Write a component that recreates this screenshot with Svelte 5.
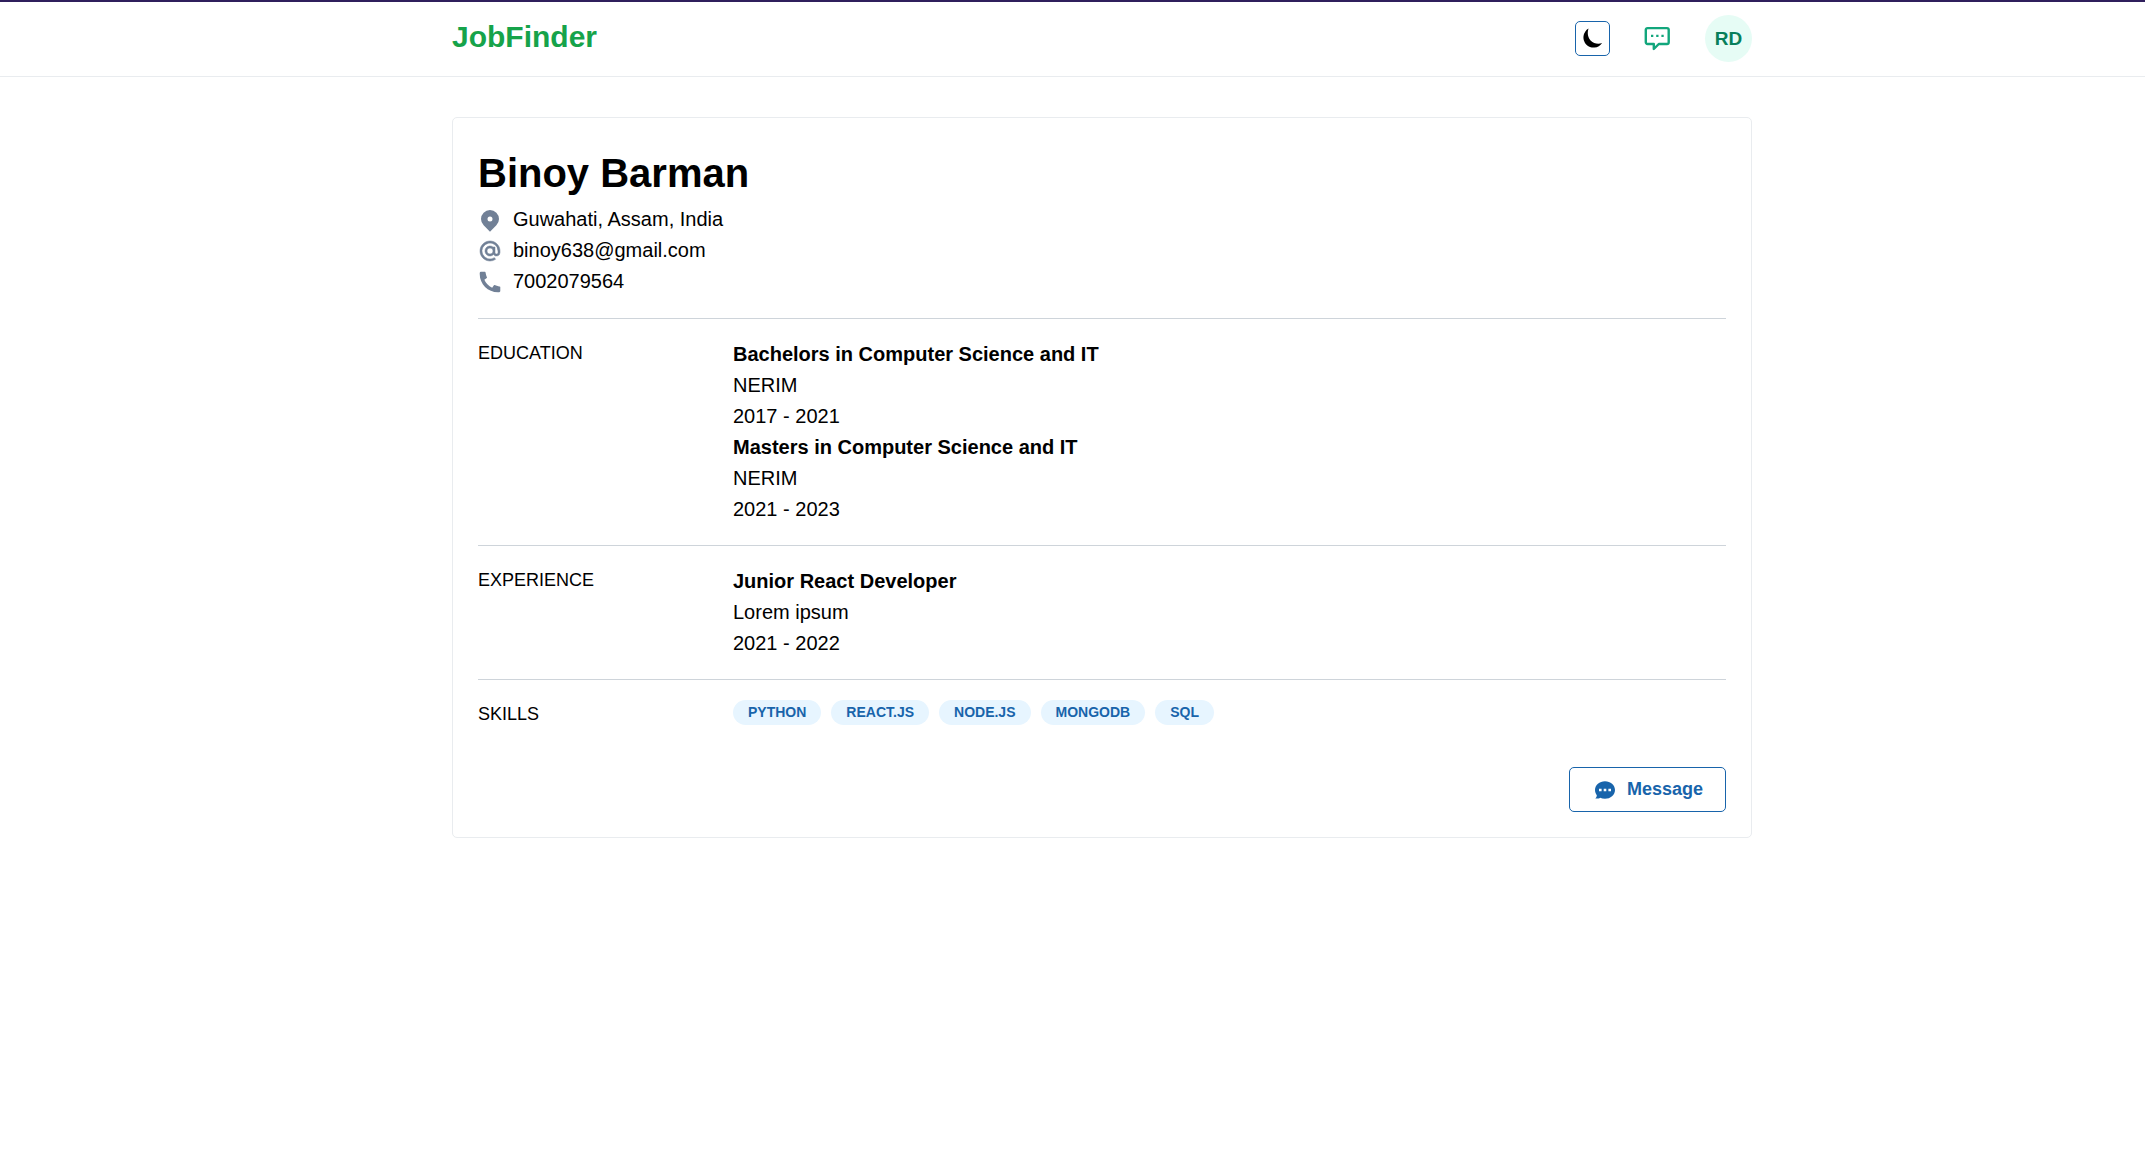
<script>
  const profile = {
    name: 'Binoy Barman',
    location: 'Guwahati, Assam, India',
    email: 'binoy638@gmail.com',
    phone: '7002079564',
  };
  const sections = [
    {
      title: 'EDUCATION',
      entries: [
        { title: 'Bachelors in Computer Science and IT', place: 'NERIM', years: '2017 - 2021' },
        { title: 'Masters in Computer Science and IT', place: 'NERIM', years: '2021 - 2023' },
      ],
    },
    {
      title: 'EXPERIENCE',
      entries: [{ title: 'Junior React Developer', place: 'Lorem ipsum', years: '2021 - 2022' }],
    },
  ];
  const skills = ['PYTHON', 'REACT.JS', 'NODE.JS', 'MONGODB', 'SQL'];
</script>

<header>
  <div class="shell bar">
    <a class="logo" href="#home">JobFinder</a>
    <nav>
      <button class="icon-button outlined" type="button" aria-label="Toggle color scheme">
        <svg width="21" height="21" viewBox="0 0 21 21" fill="currentColor" aria-hidden="true">
          <path d="M6.500.600A10.200 10.200 0 1 0 20.100 15.100C16 16.400 11.700 15.600 8.800 12.700C5.600 9.500 5.100 4.800 6.500.600Z" />
        </svg>
      </button>
      <button class="icon-button teal" type="button" aria-label="Messages">
        <svg width="27" height="27" viewBox="0 0 27 27" fill="none" aria-hidden="true">
          <path d="M3.500 3.100H23A1.700 1.700 0 0 1 24.700 4.800V17.300A1.700 1.700 0 0 1 23 19H14.800L9.800 24V19H3.500A1.700 1.700 0 0 1 1.800 17.300V4.800A1.700 1.700 0 0 1 3.500 3.100Z" stroke="currentColor" stroke-width="2.400" stroke-linejoin="round" />
          <path d="M7 9.700h2.300v2.200H7zM12.200 9.700h2.300v2.200h-2.300zM17.400 9.700h2.300v2.200h-2.300z" fill="currentColor" />
        </svg>
      </button>
      <button class="avatar" type="button">RD</button>
    </nav>
  </div>
</header>

<main>
  <article class="shell card">
    <h1>{profile.name}</h1>
    <ul class="contacts">
      <li>
        <svg width="24" height="24" viewBox="0 0 24 24" fill="currentColor" aria-hidden="true">
          <path d="M18.364 17.364L12 23.728l-6.364-6.364a9 9 0 1 1 12.728 0zM12 13.500a2.500 2.500 0 1 0 0-5 2.500 2.500 0 0 0 0 5z" />
        </svg>
        {profile.location}
      </li>
      <li>
        <svg width="24" height="24" viewBox="0 0 24 24" fill="currentColor" stroke="currentColor" stroke-width=".5" aria-hidden="true">
          <path d="M20 12a8 8 0 1 0-3.562 6.657l1.110 1.664A9.953 9.953 0 0 1 12 22C6.477 22 2 17.523 2 12S6.477 2 12 2s10 4.477 10 10v1.500a3.500 3.500 0 0 1-6.396 1.966A5 5 0 1 1 15 8h2v5.500a1.500 1.500 0 0 0 3 0V12zm-8-3a3 3 0 1 0 0 6 3 3 0 0 0 0-6z" />
        </svg>
        {profile.email}
      </li>
      <li>
        <svg width="24" height="24" viewBox="1.500 1.500 21 21" fill="currentColor" aria-hidden="true">
          <path d="M21 16.420v3.536a1 1 0 0 1-.93.998c-.437.03-.794.046-1.070.046-8.837 0-16-7.163-16-16 0-.276.015-.633.046-1.070A1 1 0 0 1 4.044 3H7.580a.5.5 0 0 1 .498.45c.023.23.044.413.064.552A13.901 13.901 0 0 0 9.350 8.003c.095.2.033.439-.147.567l-2.158 1.542a13.047 13.047 0 0 0 6.844 6.844l1.540-2.154a.462.462 0 0 1 .573-.149 13.901 13.901 0 0 0 4 1.205c.139.02.322.042.55.064a.5.5 0 0 1 .449.498z" />
        </svg>
        {profile.phone}
      </li>
    </ul>

    {#each sections as section}
      <section>
        <h2>{section.title}</h2>
        <div>
          {#each section.entries as entry}
            <h3>{entry.title}</h3>
            <p>{entry.place}</p>
            <p>{entry.years}</p>
          {/each}
        </div>
      </section>
    {/each}

    <section>
      <h2>SKILLS</h2>
      <ul class="skills">
        {#each skills as skill}
          <li>{skill}</li>
        {/each}
      </ul>
    </section>

    <footer>
      <button class="message" type="button">
        <svg width="20" height="20" viewBox="0 0 20 20" aria-hidden="true">
          <path d="M10 1.200C15.500 1.200 20 5 20 10s-4.500 8.800-10 8.800c-1.800 0-3.400-.4-4.800-1.100C4 18.500 2 18.700.3 18.500c1-1 1.600-2.300 1.500-3.300C.7 13.700 0 12 0 10 0 5 4.500 1.200 10 1.200Z" fill="currentColor" />
          <path d="M4 8.700h2.600v2.600H4zM8.700 8.700h2.600v2.600H8.700zM13.400 8.700H16v2.600h-2.600z" fill="#fff" />
        </svg>
        Message
      </button>
    </footer>
  </article>
</main>

<style>
  :global(body) {
    margin: 0;
    background: #fff;
    color: #000;
    font-family: 'Liberation Sans', Arial, sans-serif;
    font-size: 20px;
    line-height: 31px;
  }
  h1, h2, h3, p, ul { margin: 0; padding: 0; }
  ul { list-style: none; }
  button {
    box-sizing: border-box;
    margin: 0;
    padding: 0;
    border: 0;
    background: none;
    color: inherit;
    font: inherit;
    cursor: pointer;
  }
  svg { display: block; flex: none; }

  header {
    padding-left: 59px;
    border-top: 2px solid #2f1f5c;
    border-bottom: 1px solid #e9ecef;
  }
  .shell {
    box-sizing: border-box;
    max-width: 1300px;
    margin: 0 auto;
  }
  .bar {
    display: flex;
    align-items: center;
    justify-content: space-between;
    padding: 13px 0 14px;
  }
  .logo {
    align-self: flex-start;
    color: #16a34a;
    font-size: 30px;
    font-weight: 700;
    line-height: 43px;
    text-decoration: none;
  }
  nav { display: flex; align-items: center; gap: 30px; }
  .icon-button {
    display: flex;
    align-items: center;
    justify-content: center;
    width: 35px;
    height: 35px;
    border-radius: 5px;
  }
  .outlined { border: 1px solid #1864ab; }
  .teal { color: #12a67c; }
  .avatar {
    width: 47px;
    height: 47px;
    border-radius: 50%;
    background: #e6fcf5;
    color: #087f5b;
    font-size: 19px;
    font-weight: 700;
  }

  main { padding: 40px 0 40px 59px; }
  .card {
    padding: 25px;
    border: 1px solid #e9ecef;
    border-radius: 5px;
  }
  h1 { font-size: 40px; line-height: 61px; }
  .contacts { margin-bottom: 21px; }
  .contacts li { display: flex; align-items: center; gap: 11px; }
  .contacts svg { color: #718096; }
  section {
    display: grid;
    grid-template-columns: 255px 1fr;
    padding: 20px 0;
    border-top: 1px solid #ced4da;
  }
  h2 { font-size: 18px; font-weight: 400; line-height: 28px; }
  h3 { font-size: 20px; }
  .skills { display: flex; flex-wrap: wrap; align-items: flex-start; gap: 10px; }
  .skills li {
    padding: 0 15px;
    border-radius: 13px;
    background: #e7f5ff;
    color: #1864ab;
    font-size: 14px;
    font-weight: 700;
    line-height: 25px;
  }
  footer { display: flex; justify-content: flex-end; padding-top: 19px; }
  .message {
    display: flex;
    align-items: center;
    gap: 12px;
    height: 45px;
    padding: 0 22px 0 25px;
    border: 1px solid #1864ab;
    border-radius: 5px;
    color: #1864ab;
    font-size: 18px;
    font-weight: 700;
  }
</style>
